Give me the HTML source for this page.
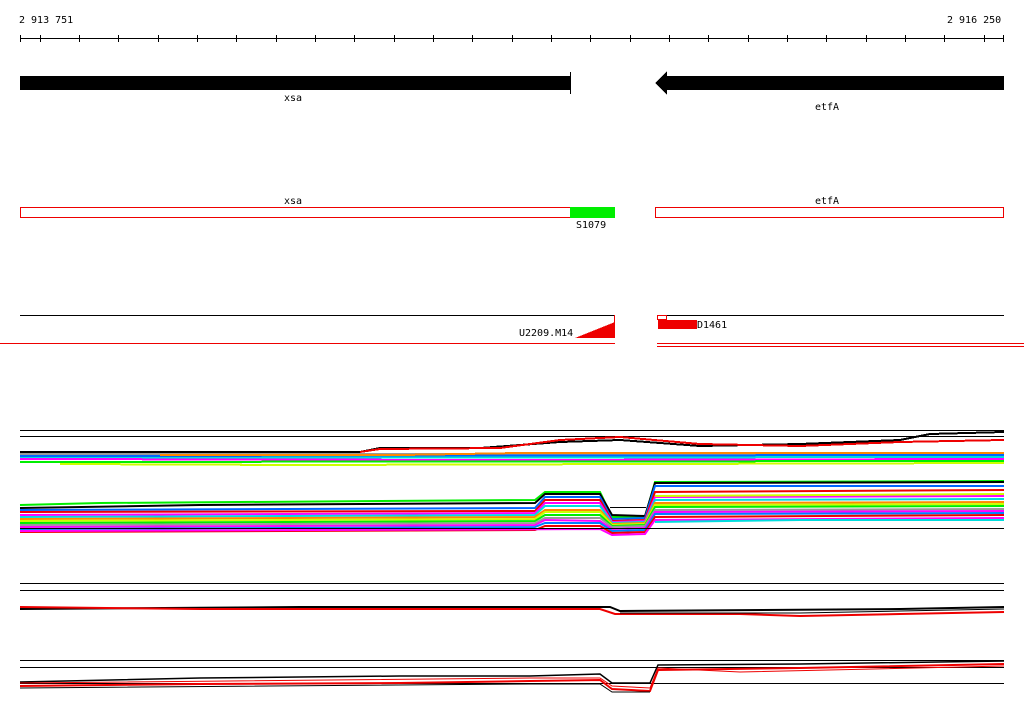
<!DOCTYPE html>
<html><head><meta charset="utf-8"><style>
html,body{margin:0;padding:0;background:#fff;width:1024px;height:714px;overflow:hidden}
svg{display:block}
text{font-family:"DejaVu Sans Mono","Liberation Mono",monospace;font-size:10px;fill:#000}
</style></head><body>
<svg width="1024" height="714" viewBox="0 0 1024 714" xmlns="http://www.w3.org/2000/svg" shape-rendering="crispEdges">
<text x="19" y="23">2 913 751</text>
<text x="947" y="23">2 916 250</text>
<line x1="20" y1="38.5" x2="1004" y2="38.5" stroke="#000"/>
<g stroke="#000">
<line x1="20.5" y1="35" x2="20.5" y2="42"/><line x1="40.5" y1="35" x2="40.5" y2="42"/><line x1="79.5" y1="35" x2="79.5" y2="42"/><line x1="118.5" y1="35" x2="118.5" y2="42"/><line x1="158.5" y1="35" x2="158.5" y2="42"/><line x1="197.5" y1="35" x2="197.5" y2="42"/><line x1="236.5" y1="35" x2="236.5" y2="42"/><line x1="276.5" y1="35" x2="276.5" y2="42"/><line x1="315.5" y1="35" x2="315.5" y2="42"/><line x1="354.5" y1="35" x2="354.5" y2="42"/><line x1="394.5" y1="35" x2="394.5" y2="42"/><line x1="433.5" y1="35" x2="433.5" y2="42"/><line x1="472.5" y1="35" x2="472.5" y2="42"/><line x1="512.5" y1="35" x2="512.5" y2="42"/><line x1="551.5" y1="35" x2="551.5" y2="42"/><line x1="590.5" y1="35" x2="590.5" y2="42"/><line x1="630.5" y1="35" x2="630.5" y2="42"/><line x1="669.5" y1="35" x2="669.5" y2="42"/><line x1="708.5" y1="35" x2="708.5" y2="42"/><line x1="748.5" y1="35" x2="748.5" y2="42"/><line x1="787.5" y1="35" x2="787.5" y2="42"/><line x1="826.5" y1="35" x2="826.5" y2="42"/><line x1="866.5" y1="35" x2="866.5" y2="42"/><line x1="905.5" y1="35" x2="905.5" y2="42"/><line x1="944.5" y1="35" x2="944.5" y2="42"/><line x1="984.5" y1="35" x2="984.5" y2="42"/><line x1="1003.5" y1="35" x2="1003.5" y2="42"/>
</g>
<rect x="20" y="76" width="550" height="14" fill="#000"/>
<line x1="570.5" y1="72" x2="570.5" y2="94" stroke="#000"/>
<polygon points="655,83 667,71 667,76 1004,76 1004,90 667,90 667,95" fill="#000"/>
<text x="284" y="101">xsa</text>
<text x="815" y="110">etfA</text>
<rect x="20.5" y="207.5" width="594" height="10" fill="none" stroke="#e00"/>
<rect x="570" y="207" width="45" height="11" fill="#00ee00"/>
<rect x="655.5" y="207.5" width="348" height="10" fill="none" stroke="#e00"/>
<text x="284" y="204">xsa</text>
<text x="815" y="204">etfA</text>
<text x="576" y="228">S1079</text>
<line x1="20" y1="315.5" x2="615" y2="315.5" stroke="#000"/>
<line x1="657" y1="315.5" x2="1004" y2="315.5" stroke="#000"/>
<line x1="0" y1="343.5" x2="615" y2="343.5" stroke="#e00"/>
<line x1="657" y1="343.5" x2="1024" y2="343.5" stroke="#e00"/>
<line x1="657" y1="346.5" x2="1024" y2="346.5" stroke="#e00"/>
<text x="519" y="336">U2209.M14</text>
<polygon points="575,338 615,322 615,338" fill="#e00"/>
<line x1="614.5" y1="315" x2="614.5" y2="338" stroke="#e00"/>
<rect x="658" y="320" width="39" height="9" fill="#e00"/>
<rect x="657.5" y="315.5" width="9" height="4" fill="none" stroke="#e00"/>
<text x="697" y="328">D1461</text>
<g stroke="#000" shape-rendering="auto">
<line x1="20" y1="430.5" x2="1004" y2="430.5"/>
<line x1="20" y1="436.5" x2="1004" y2="436.5"/>
</g>
<g fill="none" stroke-width="2">
<polyline stroke="#000" points="20,452 360,452 380,448 480,448 560,442 620,440 700,446 800,444 900,440 930,434 1004,432"/>
<polyline stroke="#e00" points="360,452 380,449 500,448 560,440 620,437 700,444 800,446 900,442 1004,440"/>
<polyline stroke="#999" points="20,454 1004,454"/>
<polyline stroke="#0066ff" points="20,456 1004,455"/>
<polyline stroke="#00dddd" points="20,458 1004,457"/>
<polyline stroke="#ff00ff" points="20,459 500,460 1004,459"/>
<polyline stroke="#ff8800" points="160,455 400,455 520,453 1004,453"/>
<polyline stroke="#00ee00" points="20,462 1004,461"/>
<polyline stroke="#ccff00" points="60,464 300,465 1004,463"/>
</g>
<g fill="none" stroke-width="2" shape-rendering="auto">
<polyline stroke="#00ee00" points="20,505 100,503 535,500 545,492 600,492 612,517 645,517 655,482 1004,481"/>
<polyline stroke="#000" points="20,508 200,505 535,503 545,494 600,494 612,515 645,516 655,483 1004,482"/>
<polyline stroke="#0066ff" points="20,510 535,508 545,497 600,497 612,519 645,518 655,486 1004,486"/>
<polyline stroke="#e00" points="20,512 535,511 545,500 600,500 612,521 645,520 655,492 1004,490"/>
<polyline stroke="#ff00ff" points="20,515 535,513 545,503 600,503 612,522 645,521 655,497 1004,496"/>
<polyline stroke="#00dddd" points="20,517 535,515 545,506 600,506 612,523 645,522 655,500 1004,499"/>
<polyline stroke="#ff8800" points="20,519 535,517 545,510 600,510 612,524 645,523 655,503 1004,502"/>
<polyline stroke="#ccff00" points="20,521 535,519 545,512 600,512 612,525 645,524 655,505 1004,504"/>
<polyline stroke="#00ee00" points="20,523 535,521 545,515 600,515 612,526 645,525 655,507 1004,506"/>
<polyline stroke="#999" points="20,525 535,523 545,518 600,518 612,527 645,526 655,510 1004,509"/>
<polyline stroke="#ff00ff" points="20,527 535,525 545,520 600,521 612,529 645,528 655,512 1004,511"/>
<polyline stroke="#0080ff" points="20,529 535,527 545,523 600,523 612,531 645,530 655,514 1004,513"/>
<polyline stroke="#e00" points="20,532 535,530 545,526 600,526 612,533 645,532 655,517 1004,515"/>
<polyline stroke="#ff00ff" points="20,531 600,529 612,535 645,534 655,520 1004,518"/>
<polyline stroke="#00dddd" points="655,522 800,520 1004,520"/>
<polyline stroke="#ccff00" points="655,496 1004,494"/>
</g>
<line x1="20" y1="528.5" x2="1004" y2="528.5" stroke="#000"/>
<line x1="610" y1="507.5" x2="646" y2="507.5" stroke="#000"/>
<line x1="20" y1="583.5" x2="1004" y2="583.5" stroke="#000"/>
<line x1="20" y1="590.5" x2="1004" y2="590.5" stroke="#000"/>
<g fill="none" shape-rendering="auto">
<polyline stroke="#000" stroke-width="2" points="20,609 300,607 610,607 620,611 900,609 1004,607"/>
<polyline stroke="#e00" stroke-width="2" points="20,607 200,609 600,609 615,614 740,614 800,616 900,614 1004,612"/>
<polyline stroke="#000" stroke-width="1" points="620,613 800,613 900,611 1004,609"/>
</g>
<line x1="20" y1="660.5" x2="1004" y2="660.5" stroke="#000"/>
<line x1="20" y1="667.5" x2="1004" y2="667.5" stroke="#000"/>
<line x1="20" y1="683.5" x2="1004" y2="683.5" stroke="#000"/>
<g fill="none" shape-rendering="auto">
<polyline stroke="#000" stroke-width="1.5" points="20,682 200,678 400,676 530,676 600,674 612,683 625,683 650,683 658,665 800,664 1004,661"/>
<polyline stroke="#e00" stroke-width="2" points="20,686 200,684 400,683 530,681 600,680 612,689 650,691 658,670 800,668 1004,664"/>
<polyline stroke="#e00" stroke-width="1" points="20,683 530,678 600,678 612,686 650,688 658,668 740,672 1004,666"/>
<polyline stroke="#000" stroke-width="1" points="20,688 530,684 600,684 612,692 650,692"/>
</g>
</svg>
</body></html>
